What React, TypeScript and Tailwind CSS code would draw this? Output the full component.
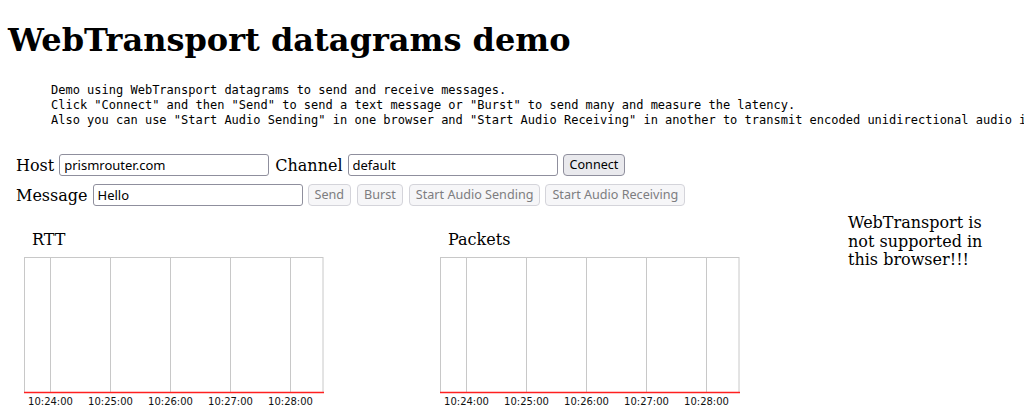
import React from "react";

const ticks = ["10:24:00", "10:25:00", "10:26:00", "10:27:00", "10:28:00"];

function Chart() {
  const xs = [26, 86, 146, 206, 266];
  return (
    <svg width={300} height={155} viewBox="0 0 300 155" className="block">
      <rect x={0.5} y={0.5} width={298.5} height={135} fill="none" stroke="#c8c8c8" strokeWidth={1} />
      {xs.map((x) => (
        <line key={x} x1={x + 0.5} y1={0} x2={x + 0.5} y2={135} stroke="#c8c8c8" strokeWidth={1} />
      ))}
      <line x1={0} y1={135.5} x2={300} y2={135.5} stroke="#ff2020" strokeWidth={1.5} />
      {xs.map((x, i) => (
        <text
          key={i}
          x={x + 0.5}
          y={147.5}
          textAnchor="middle"
          fontFamily="'DejaVu Sans', sans-serif"
          fontSize={10}
          fill="#111"
        >
          {ticks[i]}
        </text>
      ))}
    </svg>
  );
}

const inputCls =
  "h-[22px] w-[210px] border border-[#8f8f9d] rounded-[3px] px-[4px] text-[13px] font-['Noto_Sans',sans-serif] text-black bg-white outline-none";
const btnCls =
  "h-[22px] px-[6px] border rounded-[4px] text-[12.6px] leading-none font-['Noto_Sans',sans-serif]";
const enabledBtn = btnCls + " bg-[#e9e9ed] border-[#8f8f9d] text-black";
const disabledBtn = btnCls + " bg-[#f6f6f8] border-[#d4d4da] text-[#7d7d80]";

export default function App() {
  return (
    <div className="w-[1024px] h-[418px] overflow-hidden bg-white text-black font-['DejaVu_Serif',serif]">
      <h1 className="mt-[22px] ml-2 text-[32px] font-bold leading-[37px] font-['DejaVu_Serif',serif]">
        WebTransport datagrams demo
      </h1>
      <pre className="mt-[24px] ml-2 pl-[43px] text-[12px] leading-[15px] whitespace-pre font-['DejaVu_Sans_Mono',monospace]">
        {`Demo using WebTransport datagrams to send and receive messages.
Click "Connect" and then "Send" to send a text message or "Burst" to send many and measure the latency.
Also you can use "Start Audio Sending" in one browser and "Start Audio Receiving" in another to transmit encoded unidirectional audio in real time.`}
      </pre>
      <div className="mt-[26px] ml-4 flex flex-col gap-[8px] text-[16px]">
        <div className="flex items-center gap-[5px] h-[22px]">
          <span className="pt-px">Host</span>
          <input className={inputCls} defaultValue="prismrouter.com" />
          <span className="ml-px pt-px">Channel</span>
          <input className={inputCls} defaultValue="default" />
          <button className={enabledBtn}>Connect</button>
        </div>
        <div className="flex items-center gap-[5px] h-[22px]">
          <span className="pt-px">Message</span>
          <input className={inputCls} defaultValue="Hello" />
          <button className={disabledBtn} disabled>Send</button>
          <button className={disabledBtn + " ml-px"} disabled>Burst</button>
          <button className={disabledBtn + " ml-px"} disabled>Start Audio Sending</button>
          <button className={disabledBtn} disabled>Start Audio Receiving</button>
        </div>
      </div>
      <div className="mt-[8px] flex text-[16px]">
        <div className="ml-[24px] w-[300px] pt-[16px]">
          <div className="pl-[8px] leading-[19px]">RTT</div>
          <div className="mt-[8px]">
            <Chart />
          </div>
        </div>
        <div className="ml-[116px] w-[300px] pt-[16px]">
          <div className="pl-[8px] leading-[19px]">Packets</div>
          <div className="mt-[8px]">
            <Chart />
          </div>
        </div>
        <div className="ml-[108px] leading-[18.6px]">
          WebTransport is
          <br />
          not supported in
          <br />
          this browser!!!
        </div>
      </div>
    </div>
  );
}
